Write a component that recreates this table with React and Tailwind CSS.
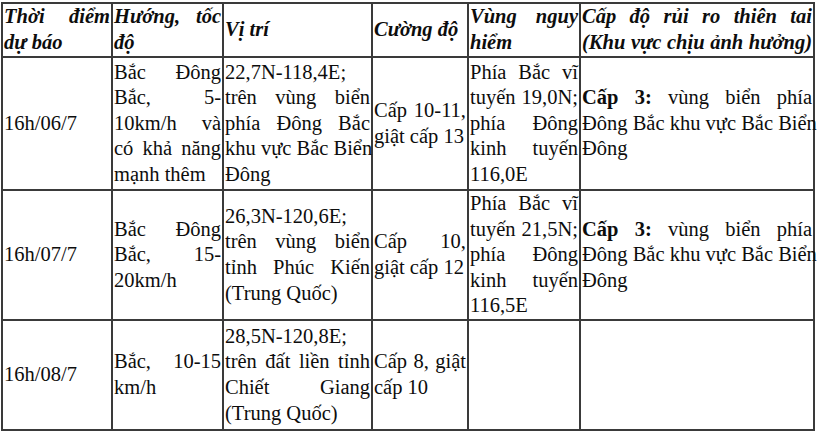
import React from "react";

const J = (t) => ({ t, j: true });
const L = (t) => ({ t, j: false });

const header = [
  [J("Thời điểm"), L("dự báo")],
  [J("Hướng, tốc"), L("độ")],
  [L("Vị trí")],
  [L("Cường độ")],
  [J("Vùng nguy"), L("hiểm")],
  [J("Cấp độ rủi ro thiên tai"), J("(Khu vực chịu ảnh hưởng)")],
];

const cap3 = [
  {
    t: (
      <>
        <b>Cấp 3:</b> vùng biển phía
      </>
    ),
    j: true,
  },
  J("Đông Bắc khu vực Bắc Biển"),
  L("Đông"),
];

const rows = [
  {
    h: "h-[133px]",
    cells: [
      [L("16h/06/7")],
      [J("Bắc Đông"), J("Bắc, 5-"), J("10km/h và"), J("có khả năng"), L("mạnh thêm")],
      [L("22,7N-118,4E;"), J("trên vùng biển"), J("phía Đông Bắc"), J("khu vực Bắc Biển"), L("Đông")],
      [J("Cấp 10-11,"), L("giật cấp 13")],
      [J("Phía Bắc vĩ"), J("tuyến 19,0N;"), J("phía Đông"), J("kinh tuyến"), L("116,0E")],
      cap3,
    ],
  },
  {
    h: "h-[130px]",
    cells: [
      [L("16h/07/7")],
      [J("Bắc Đông"), J("Bắc, 15-"), L("20km/h")],
      [L("26,3N-120,6E;"), J("trên vùng biển"), J("tỉnh Phúc Kiến"), L("(Trung Quốc)")],
      [J("Cấp 10,"), L("giật cấp 12")],
      [J("Phía Bắc vĩ"), J("tuyến 21,5N;"), J("phía Đông"), J("kinh tuyến"), L("116,5E")],
      cap3,
    ],
  },
  {
    h: "h-[110px]",
    cells: [
      [L("16h/08/7")],
      [J("Bắc, 10-15"), L("km/h")],
      [L("28,5N-120,8E;"), J("trên đất liền tỉnh"), J("Chiết Giang"), L("(Trung Quốc)")],
      [J("Cấp 8, giật"), L("cấp 10")],
      [],
      [],
    ],
  },
];

function Lines({ lines }) {
  return lines.map((ln, i) => (
    <div
      key={i}
      className={
        ln.j
          ? "whitespace-nowrap text-justify [text-align-last:justify]"
          : "whitespace-nowrap text-left"
      }
    >
      {ln.t}
    </div>
  ));
}

const widths = ["w-[110px]", "w-[111px]", "w-[149px]", "w-[96px]", "w-[112px]", "w-[234px]"];

export default function App() {
  return (
    <div className="w-[820px] h-[431px] bg-white overflow-hidden pt-[2px] pl-[1px]">
      <table className="table-fixed border-collapse w-[812px] font-['Liberation_Serif',serif] text-[20.5px] leading-[25.6px] text-[#0d0d0d]">
        <colgroup>
          {widths.map((w, i) => (
            <col key={i} className={w} />
          ))}
        </colgroup>
        <thead>
          <tr className="h-[54px]">
            {header.map((c, i) => (
              <th
                key={i}
                className="border-2 border-[#3a3a3a] align-middle px-[1px] py-0 font-bold italic text-left"
              >
                <Lines lines={c} />
              </th>
            ))}
          </tr>
        </thead>
        <tbody>
          {rows.map((r, ri) => (
            <tr key={ri} className={r.h}>
              {r.cells.map((c, ci) => (
                <td
                  key={ci}
                  className="border-2 border-[#3a3a3a] align-middle px-[1px] py-0 font-normal"
                >
                  <Lines lines={c} />
                </td>
              ))}
            </tr>
          ))}
        </tbody>
      </table>
    </div>
  );
}
